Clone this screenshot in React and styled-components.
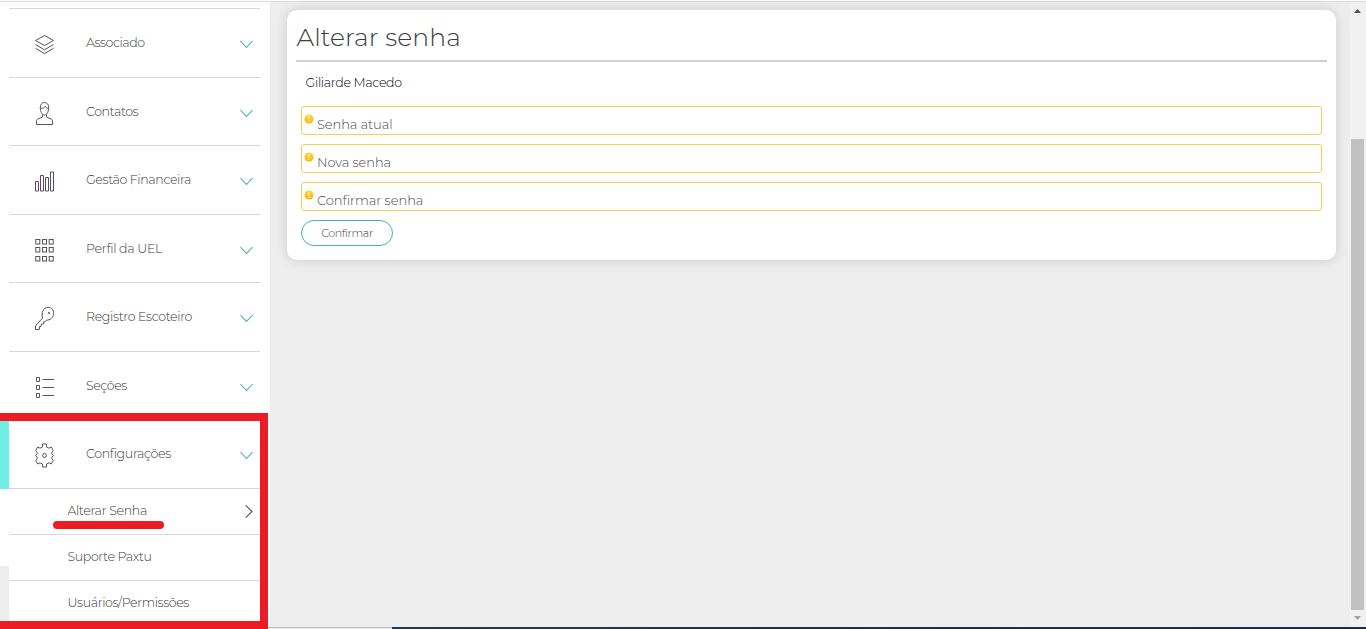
import React from "react";
import styled, { createGlobalStyle } from "styled-components";

const Global = createGlobalStyle`
  * { box-sizing: border-box; }
  html, body { margin: 0; padding: 0; overflow: hidden; }
  body { font-family: Montserrat, Inter, "Open Sans", sans-serif; font-weight: 300; font-size: 12.6px; color: #3c3c3c; background: #ededed; }
  svg { display: block; flex: none; overflow: visible; }
`;

const Page = styled.div`
  position: relative;
  width: 1366px;
  height: 629px;
  display: flex;
  flex-direction: column;
  overflow: hidden;
  background: #eeeeee;
`;
const TopEdge = styled.div`
  flex: none;
  height: 2px;
  border-top: 1px solid #fbfbfb;
  border-bottom: 1px solid #d9dcdb;
`;
const Body = styled.div`
  height: 625px;
  display: flex;
`;
const Sidebar = styled.nav`
  width: 270px;
  flex: none;
  display: flex;
  background: #fff;
`;
const Gutter = styled.div`
  width: 9px;
  display: flex;
  flex-direction: column;
  justify-content: flex-end;
`;
const ActiveMark = styled.div`
  height: 70px;
  background: #70eee6;
`;
const GutterGap = styled.div`
  height: 77px;
`;
const GutterEnd = styled.div`
  height: 61px;
  background: #ededed;
`;
const Menu = styled.div`
  width: 251px;
  padding-top: 6px;
  overflow: hidden;
`;
const MenuItem = styled.div`
  height: ${(p) => p.$h}px;
  border-top: 1px solid #d6d8d7;
  display: flex;
  align-items: flex-start;
  padding: 0 7px 0 25px;
`;
const IconBox = styled.span`
  width: 24px;
  padding-top: 23px;
`;
const Label = styled.span`
  flex: 1;
  line-height: 16px;
  white-space: nowrap;
  letter-spacing: ${(p) => p.$track || 0}px;
`;
const MenuLabel = styled(Label)`
  padding: 26px 0 0 28px;
`;
const ChevronBox = styled.span`
  padding-top: 32px;
`;
const SubItem = styled.div`
  height: 46px;
  border-top: 1px solid #d6d8d7;
  display: flex;
  align-items: flex-start;
  padding: 14px 7px 0 58.5px;
`;
const ArrowBox = styled.span`
  padding-top: 2px;
`;
const Main = styled.main`
  flex: 1;
  padding: 8px 14px 0 17px;
`;
const Card = styled.section`
  height: 250px;
  border-radius: 10px;
  background: #fff;
  box-shadow: 0 0 12px 1px rgba(0, 0, 0, 0.13);
  padding: 0 9px;
`;
const Title = styled.h1`
  margin: 0;
  height: 52px;
  padding: 12px 0 0 0.5px;
  border-bottom: 2px solid #d0d0d0;
  font-size: 25px;
  line-height: 31px;
  font-weight: 300;
  letter-spacing: 0.1px;
`;
const Form = styled.div`
  padding: 13px 5px 0;
  display: flex;
  flex-direction: column;
`;
const UserName = styled.div`
  height: 31px;
  padding-left: 4.5px;
  line-height: 16px;
  color: #000;
  letter-spacing: -0.32px;
`;
const Field = styled.div`
  height: 29px;
  margin-bottom: 9px;
  border: 1px solid #f6cf57;
  border-radius: 3px;
  display: flex;
  align-items: flex-start;
  padding: 7px 0 0 2px;
  font-size: 13px;
  color: #484848;
`;
const FieldLabel = styled(Label)`
  padding: 2px 0 0 3px;
`;
const Confirm = styled.button`
  width: 92px;
  height: 26px;
  padding: 0;
  border: 1px solid #45b5a6;
  border-radius: 13px;
  background: #fff;
  color: #3c3c3c;
  font: inherit;
  font-size: 11px;
  letter-spacing: -0.35px;
`;
const Scrollbar = styled.div`
  width: 16px;
  flex: none;
  background: #f1f1f1;
  display: flex;
  flex-direction: column;
  align-items: center;
  padding: 7px 1px 7px 0;
`;
const Thumb = styled.div`
  width: 13px;
  height: 471px;
  margin: 126px 0 6px;
  background: #c1c1c1;
`;
const BottomEdge = styled.div`
  height: 2px;
  display: flex;
`;
const StatusEdge = styled.div`
  width: 392px;
  background: #f4f4f4;
  border-top: 1px solid #b9b9b9;
`;
const TaskEdge = styled.div`
  flex: 1;
  background: linear-gradient(90deg, #25394a, #1c2b4b);
`;
const Highlight = styled.div`
  position: absolute;
  left: -8px;
  top: 413px;
  width: 276px;
  height: 216px;
  border: 8px solid #ed1c24;
`;
const Underline = styled.div`
  position: absolute;
  left: 53px;
  top: 521px;
  width: 111px;
  height: 8px;
  border-radius: 4px;
  background: #ed1c24;
`;

const Icon = ({ children }) => (
  <svg width="21" height="25" viewBox="0 0 21 25" fill="none" stroke="#555" strokeWidth="1">
    {children}
  </svg>
);
const Layers = () => (
  <Icon>
    <path d="M10.500 3.500 1.500 8.500l9 5 9-5zM1.500 12.500l9 5.300 9-5.300M1.500 16.300l9 5.300 9-5.300" />
  </Icon>
);
const Person = () => (
  <Icon>
    <path d="M10.500 1.500c-3 0-4.200 2.300-4.200 5.200 0 3.500 1.500 7.300 4.200 7.300s4.200-3.800 4.200-7.300c0-2.900-1.200-5.200-4.200-5.200zM6.300 7.300c3 .1 4.200-.6 5-2 .6 1.300 1.700 2 3.400 2M8.500 13.500V16l-4.500 2c-1 .5-1.500 1-1.500 2v3.500h16V20c0-1-.5-1.500-1.500-2l-4.500-2v-2.500" />
  </Icon>
);
const Bars = () => (
  <Icon>
    <path d="M1.500 12.500h3v9.500h-3zM6.500 6.500h3V22h-3zM11.500 8.500h3V22h-3zM16.500 3h3v19h-3z" stroke="#5b4a62" />
  </Icon>
);
const Grid = () => (
  <Icon>
    {[1.5, 9.5, 18.5].map((y) =>
      [1.8, 8.5, 15.2].map((x) => <rect key={`${x}-${y}`} x={x} y={y} width="4" height="4.5" />)
    )}
  </Icon>
);
const Key = () => (
  <Icon>
    <path d="M8.500 12C7 6.500 9.500 1.500 14 1.200c4 0 5.800 3 5.600 6.300-.3 4.500-3.800 6.800-7.100 6.600L11 15.800l-1.500.2-.2 2-2 .3-.2 2-1.600.3-.2 2.900H1.500V20z" />
    <path d="M14.500 6.500h1v1h-1z" />
  </Icon>
);
const List = () => (
  <Icon>
    <path d="M2.500 2.500h3v4h-3zM2.500 10.500h3v4h-3zM2.500 18.500h3v4h-3z" />
    <path d="M8.500 4.500H20M8.500 12.500H20M8.500 20.500H20" strokeWidth="1.200" />
  </Icon>
);
const Gear = () => (
  <Icon>
    <path d="M8.500 1h4v3l2.500 1.200 2.300-1.200 2 3.500-1.500 1.800v1.500l1.700 1.700-1.700 1.700v1.500l1.500 1.800-2 3.500L15 19.800 12.500 21v3h-4v-3L6 19.800 3.700 21l-2-3.500 1.500-1.800v-1.500L1.500 12.500l1.700-1.700V9.300L1.700 7.500l2-3.500L6 5.200 8.500 4z" />
    <ellipse cx="10.500" cy="12.500" rx="1.800" ry="2.200" />
  </Icon>
);
const ChevronDown = () => (
  <svg width="13" height="8" viewBox="0 0 13 8" fill="none" stroke="#52b9ad" strokeWidth="1.1">
    <path d="M.4.2 6.500 6.400 12.600.2" />
  </svg>
);
const ChevronRight = () => (
  <svg width="8" height="13" viewBox="0 0 8 13" fill="none" stroke="#555" strokeWidth="1.100">
    <path d="M.8.4 7 6.500.8 12.600" />
  </svg>
);
const Warning = () => (
  <svg width="10" height="10" viewBox="0 0 10 10">
    <defs>
      <linearGradient id="amber" x1="0" y1="0" x2="0" y2="1">
        <stop offset="0" stopColor="#ffd34d" />
        <stop offset="1" stopColor="#f9b800" />
      </linearGradient>
    </defs>
    <circle cx="5" cy="5" r="4.600" fill="url(#amber)" />
    <path d="M5 2v3.600M5 6.800v1.200" stroke="#fff3c4" strokeWidth="1.300" />
  </svg>
);
const Arrow = ({ d, fill }) => (
  <svg width="7" height="4" viewBox="0 0 7 4">
    <path d={d} fill={fill} />
  </svg>
);

const items = [
  ["Associado", Layers, 69, -0.42],
  ["Contatos", Person, 68, -0.42],
  ["Gestão Financeira", Bars, 69, -0.38],
  ["Perfil da UEL", Grid, 68, -0.31],
  ["Registro Escoteiro", Key, 69, -0.36],
  ["Seções", List, 68, -0.42],
  ["Configurações", Gear, 69, -0.34],
];
const subItems = [
  ["Alterar Senha", -0.33],
  ["Suporte Paxtu", -0.4],
  ["Usuários/Permissões", -0.4],
];
const fields = [
  ["Senha atual", -0.1],
  ["Nova senha", -0.1],
  ["Confirmar senha", -0.06],
];

export default function App() {
  return (
    <Page>
      <Global />
      <TopEdge />
      <Body>
        <Sidebar>
          <Gutter>
            <ActiveMark />
            <GutterGap />
            <GutterEnd />
          </Gutter>
          <Menu>
            {items.map(([name, Glyph, h, track]) => (
              <MenuItem key={name} $h={h}>
                <IconBox><Glyph /></IconBox>
                <MenuLabel $track={track}>{name}</MenuLabel>
                <ChevronBox><ChevronDown /></ChevronBox>
              </MenuItem>
            ))}
            {subItems.map(([name, track], i) => (
              <SubItem key={name}>
                <Label $track={track}>{name}</Label>
                {i === 0 && <ArrowBox><ChevronRight /></ArrowBox>}
              </SubItem>
            ))}
          </Menu>
        </Sidebar>
        <Main>
          <Card>
            <Title>Alterar senha</Title>
            <Form>
              <UserName>Giliarde Macedo</UserName>
              {fields.map(([name, track]) => (
                <Field key={name}>
                  <Warning />
                  <FieldLabel $track={track}>{name}</FieldLabel>
                </Field>
              ))}
              <Confirm>Confirmar</Confirm>
            </Form>
          </Card>
        </Main>
        <Scrollbar>
          <Arrow d="M0 4 3.500 0 7 4z" fill="#505050" />
          <Thumb />
          <Arrow d="M0 0h7L3.500 4z" fill="#a3a3a3" />
        </Scrollbar>
      </Body>
      <BottomEdge>
        <StatusEdge />
        <TaskEdge />
      </BottomEdge>
      <Highlight />
      <Underline />
    </Page>
  );
}
